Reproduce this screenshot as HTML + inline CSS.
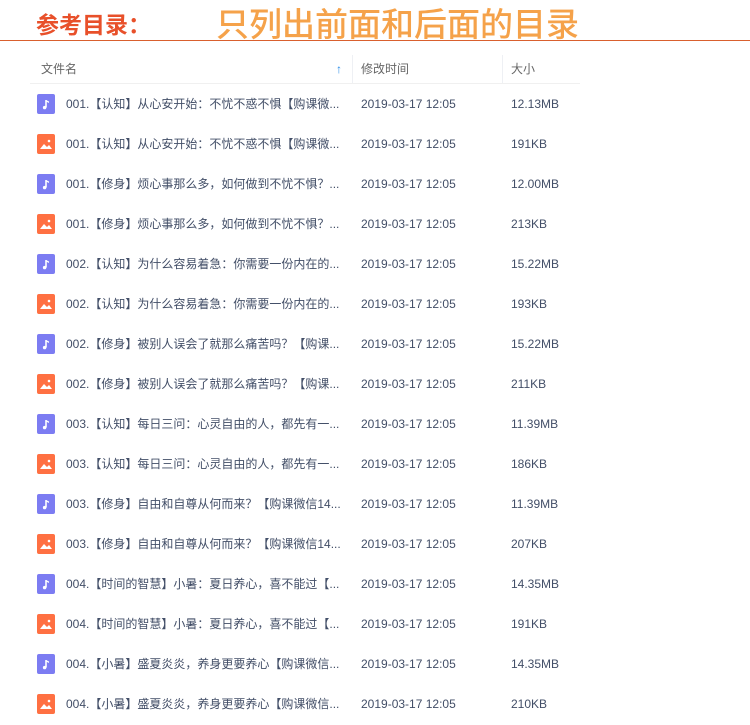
<!DOCTYPE html><html><head><meta charset="utf-8"><style>
body{margin:0;width:750px;height:725px;background:#fff;font-family:"Liberation Sans","Noto Sans CJK SC",sans-serif;position:relative;overflow:hidden}
.t1{position:absolute;left:36px;top:9px;font:bold 23px/28px "Noto Sans CJK SC",sans-serif;color:#e8502a}
.t2{position:absolute;left:216px;top:2px;font:500 33px/40px "Noto Sans CJK SC",sans-serif;color:#f5a24a}
.line{position:absolute;left:0;top:40px;width:750px;height:1px;background:#d9602e}
.hd{position:absolute;top:55px;height:28px;left:30px;width:550px;border-bottom:1px solid #f0f0f0;font-size:12px;color:#666}
.hd span{position:absolute;top:6px;line-height:16px}
.sep{position:absolute;top:0;width:1px;height:28px;background:#eef0f4}
.row{position:absolute;left:0;height:40px;width:750px;font-size:12px;color:#424e67}
.row span{position:absolute;top:12px;line-height:16px;height:16px;white-space:nowrap}
.ic{position:absolute;left:37px;top:10px;width:18px;height:20px;border-radius:2px}
.a{background:#7c7cf2}.i{background:#ff7042}
.ic svg{position:absolute;left:0;top:0}
</style></head><body>
<div class="t1">参考目录：</div>
<div class="t2">只列出前面和后面的目录</div>
<div class="line"></div>
<div class="hd"><span style="left:11px">文件名</span><span style="left:306px;color:#2a8de8;font-weight:bold">↑</span><div class="sep" style="left:322px"></div><span style="left:331px">修改时间</span><div class="sep" style="left:472px"></div><span style="left:481px">大小</span></div>
<div id="rows"></div>
<script>
var d=[["001.【认知】从心安开始：不忧不惑不惧【购课微...","12.13MB"],["001.【认知】从心安开始：不忧不惑不惧【购课微...","191KB"],["001.【修身】烦心事那么多，如何做到不忧不惧？...","12.00MB"],["001.【修身】烦心事那么多，如何做到不忧不惧？...","213KB"],["002.【认知】为什么容易着急：你需要一份内在的...","15.22MB"],["002.【认知】为什么容易着急：你需要一份内在的...","193KB"],["002.【修身】被别人误会了就那么痛苦吗？【购课...","15.22MB"],["002.【修身】被别人误会了就那么痛苦吗？【购课...","211KB"],["003.【认知】每日三问：心灵自由的人，都先有一...","11.39MB"],["003.【认知】每日三问：心灵自由的人，都先有一...","186KB"],["003.【修身】自由和自尊从何而来？【购课微信14...","11.39MB"],["003.【修身】自由和自尊从何而来？【购课微信14...","207KB"],["004.【时间的智慧】小暑：夏日养心，喜不能过【...","14.35MB"],["004.【时间的智慧】小暑：夏日养心，喜不能过【...","191KB"],["004.【小暑】盛夏炎炎，养身更要养心【购课微信...","14.35MB"],["004.【小暑】盛夏炎炎，养身更要养心【购课微信...","210KB"]];
var h="";d.forEach(function(r,k){var au=k%2==0;
var ic=au?'<div class="ic a"><svg width="18" height="20"><path d="M9 6v7.5" stroke="#fff" stroke-width="1.6"/><circle cx="7.6" cy="13.6" r="1.7" fill="#fff"/><path d="M9 6l3 1.5v1.5l-3-1.5z" fill="#fff"/></svg></div>':'<div class="ic i"><svg width="18" height="20"><path d="M3 15l4-5 3 3 2-2 3 4z" fill="#fff"/><circle cx="12" cy="7" r="1.3" fill="#fff"/></svg></div>';
h+='<div class="row" style="top:'+(84+k*40)+'px">'+ic+'<span style="left:66px">'+r[0]+'</span><span style="left:361px">2019-03-17 12:05</span><span style="left:511px">'+r[1]+'</span></div>';});
document.getElementById("rows").innerHTML=h;
</script>
</body></html>
